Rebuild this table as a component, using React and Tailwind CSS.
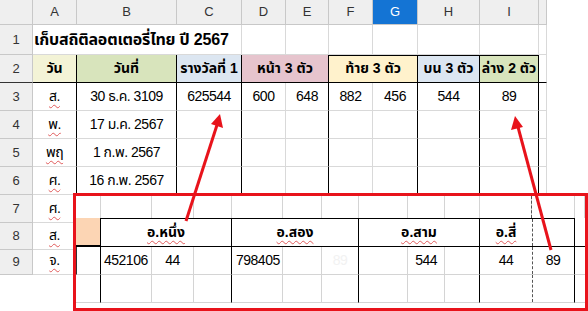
import React from 'react';

const font = { fontFamily: "'Liberation Sans', 'Noto Sans Thai', 'Noto Sans', sans-serif" };

const headCols = [
  { k: 'A', w: 'w-[44px]' },
  { k: 'B', w: 'w-[100px]' },
  { k: 'C', w: 'w-[65px]' },
  { k: 'D', w: 'w-[44px]' },
  { k: 'E', w: 'w-[43px]' },
  { k: 'F', w: 'w-[44px]' },
  { k: 'G', w: 'w-[45px]', sel: true },
  { k: 'H', w: 'w-[62px]' },
  { k: 'I', w: 'w-[59px]' },
  { k: '', w: 'w-[8px]' },
];

// black right border after A, B, C, E, G, H, I
const bodyCols = [
  { w: 'w-[44px]', b: true },
  { w: 'w-[100px]', b: true },
  { w: 'w-[65px]', b: true },
  { w: 'w-[44px]' },
  { w: 'w-[43px]', b: true },
  { w: 'w-[44px]' },
  { w: 'w-[45px]', b: true },
  { w: 'w-[62px]', b: true },
  { w: 'w-[59px]', b: true },
  { w: 'w-[8px]' },
];

const rows = [
  { n: 3, h: 'h-[28px]', v: ['ส.', '30 ธ.ค. 3109', '625544', '600', '648', '882', '456', '544', '89'] },
  { n: 4, h: 'h-[28px]', v: ['พ.', '17 ม.ค. 2567'] },
  { n: 5, h: 'h-[28px]', v: ['พฤ', '1 ก.พ. 2567'] },
  { n: 6, h: 'h-[28px]', v: ['ศ.', '16 ก.พ. 2567'] },
  { n: 7, h: 'h-[28px]', v: ['ศ.'] },
  { n: 8, h: 'h-[27px]', v: ['ส.'] },
  { n: 9, h: 'h-[25px]', v: ['จ.'] },
];

const headers = [
  { t: 'วัน', w: 'w-[44px]', bg: 'bg-[#f3f3d6]' },
  { t: 'วันที่', w: 'w-[100px]', bg: 'bg-[#d8e4bc]' },
  { t: 'รางวัลที่ 1', w: 'w-[65px]', bg: 'bg-[#dce6f1]' },
  { t: 'หน้า 3 ตัว', w: 'w-[87px]', bg: 'bg-[#e6c4cd]' },
  { t: 'ท้าย 3 ตัว', w: 'w-[89px]', bg: 'bg-[#fff2cc]', top: true },
  { t: 'บน 3 ตัว', w: 'w-[62px]', bg: 'bg-[#dce6f1]', top: true },
  { t: 'ล่าง 2 ตัว', w: 'w-[59px]', bg: 'bg-[#d8e4bc]', top: true },
];

const RowHead = ({ n, h, dark }) => (
  <div className={`${h} w-[33px] shrink-0 bg-[#efefef] border-r border-b border-[#c8c8c8] ${dark ? 'border-b-[#333]' : ''} flex items-center justify-center text-[13px] text-[#333]`}>
    {n}
  </div>
);

const Spell = ({ children }) => (
  <span className="underline decoration-wavy decoration-[#e05a5a] decoration-1 underline-offset-[3px]">{children}</span>
);

function Sheet() {
  return (
    <div className="w-[547px] flex flex-col">
      <div className="flex h-[25px]">
        <div className="w-[33px] shrink-0 bg-[#efefef] border-r border-b border-[#c8c8c8]" />
        {headCols.map((c, i) => (
          <div
            key={i}
            className={`${c.w} shrink-0 border-r border-b border-[#c8c8c8] flex items-center justify-center text-[13px] ${c.sel ? 'bg-[#1474d4] text-white' : 'bg-[#efefef] text-[#333]'}`}
          >
            {c.k}
          </div>
        ))}
      </div>

      <div className="flex h-[30px]">
        <RowHead n={1} h="h-[30px]" />
        <div className="w-[209px] shrink-0 border-r border-b border-[#d9d9d9] flex items-end pb-[2px] pl-px">
          <span className="whitespace-nowrap text-[16px] font-bold text-black tracking-[-0.2px]">เก็บสถิติลอตเตอรี่ไทย ปี 2567</span>
        </div>
        <div className="w-[44px] shrink-0 border-r border-b border-[#d9d9d9]" />
        <div className="w-[43px] shrink-0 border-r border-b border-[#d9d9d9]" />
        <div className="w-[44px] shrink-0 border-r border-b border-[#d9d9d9]" />
        <div className="w-[45px] shrink-0 border-r border-b border-[#d9d9d9]" />
        <div className="w-[62px] shrink-0 border-r border-b border-[#d9d9d9]" />
        <div className="w-[59px] shrink-0 border-r border-b border-[#d9d9d9]" />
        <div className="w-[8px] shrink-0 border-r border-b border-[#d9d9d9]" />
      </div>

      <div className="flex h-[28px]">
        <RowHead n={2} h="h-[28px]" dark />
        {headers.map((c, i) => (
          <div
            key={i}
            className={`${c.w} ${c.bg} shrink-0 border-r border-b border-r-black border-b-black ${c.top ? 'border-t border-t-black' : ''} flex items-end justify-center pb-[3px] text-[14px] font-bold text-black whitespace-nowrap`}
          >
            {c.t}
          </div>
        ))}
        <div className="w-[8px] shrink-0 border-r border-b border-[#d9d9d9] border-b-black" />
      </div>

      {rows.map((r) => (
        <div key={r.n} className={`flex ${r.h}`}>
          <RowHead n={r.n} h={r.h} />
          {bodyCols.map((c, i) => (
            <div
              key={i}
              className={`${c.w} shrink-0 border-r border-b border-[#d9d9d9] ${c.b ? 'border-r-black' : ''} flex items-end justify-center pb-[3px] text-[14px] text-black whitespace-nowrap tracking-[-0.5px]`}
            >
              {i === 0 && r.v[0] ? <Spell>{r.v[0]}</Spell> : r.v[i]}
            </div>
          ))}
        </div>
      ))}
    </div>
  );
}

function Pasted() {
  const g = 'border-[#d4d4d4]';
  return (
    <div className="absolute left-[73px] top-[193px] w-[515px] h-[118px] border-[3px] border-[#e8131b] bg-white overflow-hidden">
      <div className="flex flex-col">
        {/* top blank row */}
        <div className="flex h-[22px]">
          {['w-[25px]', 'w-[51px]', 'w-[42px]', 'w-[38px]', 'w-[51px]', 'w-[39px]', 'w-[37px]', 'w-[49px]', 'w-[37px]', 'w-[35px]', 'w-[52px]', 'w-[43px]', 'w-[10px]'].map((w, i) => (
            <div key={i} className={`${w} shrink-0 border-r ${g} ${i === 10 ? 'relative' : ''}`}>
              {i === 10 && <div className="absolute right-[-1px] top-0 bottom-0 border-r border-dashed border-[#555]" />}
            </div>
          ))}
        </div>

        {/* merged header row */}
        <div className="flex h-[29px]">
          <div className="w-[25px] shrink-0 bg-[#fcd5b4] border-b-2 border-b-black border-r border-r-black" />
          {[
            { t: 'อ.หนึ่ง', w: 'w-[131px]' },
            { t: 'อ.สอง', w: 'w-[127px]' },
            { t: 'อ.สาม', w: 'w-[121px]' },
          ].map((c, i) => (
            <div key={i} className={`${c.w} shrink-0 border-t border-b border-r border-black flex items-end justify-center pb-[3px] text-[14px] font-bold text-black`}>
              <Spell>{c.t}</Spell>
            </div>
          ))}
          <div className="w-[52px] shrink-0 border-t border-b border-black flex items-end justify-center pb-[3px] text-[14px] font-bold text-black">
            <Spell>อ.สี่</Spell>
          </div>
          <div className="w-[43px] shrink-0 border-t border-b border-r border-black relative">
            <div className="absolute left-0 top-0 bottom-0 border-l border-dashed border-[#555]" />
          </div>
          <div className="w-[10px] shrink-0 border-b border-black" />
        </div>

        {[0, 1].map((k) => (
          <div key={k} className="flex h-[28px] text-[14px] text-black tracking-[-0.5px]">
            <div className={`w-[25px] shrink-0 border-r border-r-black border-b ${g} ${k === 0 ? 'border-l border-l-[#333]' : ''}`} />
            <div className={`w-[51px] shrink-0 border-r border-b ${g} flex items-end pb-[3px] pl-[3px]`}>{k === 0 && '452106'}</div>
            <div className={`w-[42px] shrink-0 border-r border-b ${g} flex items-end justify-center pb-[3px]`}>{k === 0 && '44'}</div>
            <div className={`w-[38px] shrink-0 border-r border-b ${g} border-r-black`} />
            <div className={`w-[51px] shrink-0 border-r border-b ${g} flex items-end pb-[3px] pl-[4px]`}>{k === 0 && '798405'}</div>
            <div className={`w-[39px] shrink-0 border-r border-b ${g}`} />
            <div className={`w-[37px] shrink-0 border-r border-b ${g} border-r-black flex items-end justify-center pb-[3px] text-[#f2f2f2]`}>{k === 0 && '89'}</div>
            <div className={`w-[49px] shrink-0 border-r border-b ${g}`} />
            <div className={`w-[37px] shrink-0 border-r border-b ${g} flex items-end justify-end pb-[3px] pr-[7px]`}>{k === 0 && '544'}</div>
            <div className={`w-[35px] shrink-0 border-r border-b ${g} border-r-black`} />
            <div className={`w-[52px] shrink-0 border-b ${g} flex items-end justify-center pb-[3px]`}>{k === 0 && '44'}</div>
            <div className={`w-[43px] shrink-0 border-r border-b ${g} border-r-black relative flex items-end justify-center pb-[3px]`}>
              <div className="absolute left-0 top-0 bottom-0 border-l border-dashed border-[#555]" />
              {k === 0 && '89'}
            </div>
            <div className={`w-[10px] shrink-0 border-b ${g}`} />
          </div>
        ))}
      </div>
    </div>
  );
}

function Arrows() {
  return (
    <svg className="absolute inset-0 pointer-events-none" width="588" height="311" viewBox="0 0 588 311">
      <line x1="186" y1="221" x2="217" y2="125" stroke="#e8131b" strokeWidth="3" />
      <polygon points="220,114 223,128 211,124" fill="#e8131b" />
      <line x1="551" y1="250" x2="518" y2="127" stroke="#e8131b" strokeWidth="3" />
      <polygon points="515,116 523,127 511,130" fill="#e8131b" />
    </svg>
  );
}

export default function App() {
  return (
    <div className="relative w-[588px] h-[311px] bg-white overflow-hidden" style={font}>
      <Sheet />
      <Pasted />
      <Arrows />
    </div>
  );
}
